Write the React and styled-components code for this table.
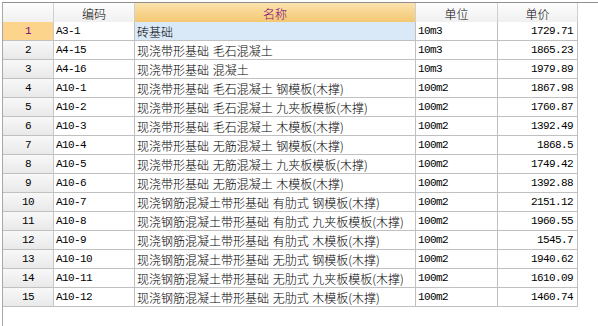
import React from "react";
import styled, { createGlobalStyle } from "styled-components";

const GlobalStyle = createGlobalStyle`
  html, body {
    margin: 0;
    padding: 0;
    background: #ffffff;
  }
`;

const Frame = styled.div`
  width: 598px;
  height: 326px;
  box-sizing: border-box;
  padding: 2px 0 0 2px;
  background: #ffffff;
  overflow: hidden;
`;

const Sheet = styled.div`
  height: 100%;
  border-left: 1px solid #a8a8a8;
  border-top: 1px solid #8f8f8f;
`;

const Grid = styled.div`
  display: grid;
  grid-template-columns: 51px 81px 281px 82px 80px;
  grid-auto-rows: 19px;
  width: max-content;
`;

const HeadCell = styled.div`
  height: 22px;
  box-sizing: border-box;
  border-right: 1px solid #d0d0d0;
  border-bottom: 1px solid #c4c4c4;
  background: ${(p) =>
    p.$active
      ? "linear-gradient(#fbe2ad, #f3c56b)"
      : "linear-gradient(#fdfdfd, #efefef)"};
  color: ${(p) => (p.$active ? "#800080" : "#000000")};
  font-family: "Noto Sans CJK SC", sans-serif;
  font-size: 12px;
  font-weight: 300;
  display: flex;
  align-items: center;
  justify-content: center;
  padding-bottom: 1px;
`;

const Cell = styled.div`
  box-sizing: border-box;
  border-right: 1px solid #c0c0c0;
  border-bottom: 1px solid #c0c0c0;
  display: flex;
  align-items: center;
  white-space: nowrap;
  overflow: hidden;
  color: #000000;
  font-size: 12px;
  background: ${(p) => p.$bg || "#ffffff"};
  justify-content: ${(p) =>
    p.$align === "right" ? "flex-end" : p.$align === "center" ? "center" : "flex-start"};
  padding: ${(p) => (p.$align === "right" ? "0 4px 0 0" : "0 0 0 2px")};
`;

const RowNo = styled(Cell)`
  background: ${(p) =>
    p.$active ? "#fdd48b" : "linear-gradient(#f8f8f8, #e9e9e9)"};
  color: ${(p) => (p.$active ? "#800080" : "#000000")};
  border-right-color: #c8c8c8;
  padding: 0;
`;

const Mono = styled.span`
  font-family: "Liberation Mono", "DejaVu Sans Mono", monospace;
  font-size: 11px;
  letter-spacing: -0.6px;
`;

const Han = styled.span`
  font-family: "Noto Sans CJK SC", sans-serif;
  font-size: 12px;
  font-weight: 300;
  word-spacing: 1px;
`;

const rows = [
  ["A3-1", "砖基础", "10m3", "1729.71"],
  ["A4-15", "现浇带形基础 毛石混凝土", "10m3", "1865.23"],
  ["A4-16", "现浇带形基础 混凝土", "10m3", "1979.89"],
  ["A10-1", "现浇带形基础 毛石混凝土 钢模板(木撑)", "100m2", "1867.98"],
  ["A10-2", "现浇带形基础 毛石混凝土 九夹板模板(木撑)", "100m2", "1760.87"],
  ["A10-3", "现浇带形基础 毛石混凝土 木模板(木撑)", "100m2", "1392.49"],
  ["A10-4", "现浇带形基础 无筋混凝土 钢模板(木撑)", "100m2", "1868.5"],
  ["A10-5", "现浇带形基础 无筋混凝土 九夹板模板(木撑)", "100m2", "1749.42"],
  ["A10-6", "现浇带形基础 无筋混凝土 木模板(木撑)", "100m2", "1392.88"],
  ["A10-7", "现浇钢筋混凝土带形基础 有肋式 钢模板(木撑)", "100m2", "2151.12"],
  ["A10-8", "现浇钢筋混凝土带形基础 有肋式 九夹板模板(木撑)", "100m2", "1960.55"],
  ["A10-9", "现浇钢筋混凝土带形基础 有肋式 木模板(木撑)", "100m2", "1545.7"],
  ["A10-10", "现浇钢筋混凝土带形基础 无肋式 钢模板(木撑)", "100m2", "1940.62"],
  ["A10-11", "现浇钢筋混凝土带形基础 无肋式 九夹板模板(木撑)", "100m2", "1610.09"],
  ["A10-12", "现浇钢筋混凝土带形基础 无肋式 木模板(木撑)", "100m2", "1460.74"],
];

export default function App() {
  return (
    <Frame>
      <GlobalStyle />
      <Sheet>
        <Grid>
          <HeadCell />
          <HeadCell>编码</HeadCell>
          <HeadCell $active>名称</HeadCell>
          <HeadCell>单位</HeadCell>
          <HeadCell>单价</HeadCell>
          {rows.map(([code, name, unit, price], i) => (
            <React.Fragment key={code}>
              <RowNo $align="center" $active={i === 0}>
                <Mono>{i + 1}</Mono>
              </RowNo>
              <Cell>
                <Mono>{code}</Mono>
              </Cell>
              <Cell $bg={i === 0 ? "#d9e9f8" : undefined}>
                <Han>{name}</Han>
              </Cell>
              <Cell>
                <Mono>{unit}</Mono>
              </Cell>
              <Cell $align="right">
                <Mono>{price}</Mono>
              </Cell>
            </React.Fragment>
          ))}
        </Grid>
      </Sheet>
    </Frame>
  );
}
